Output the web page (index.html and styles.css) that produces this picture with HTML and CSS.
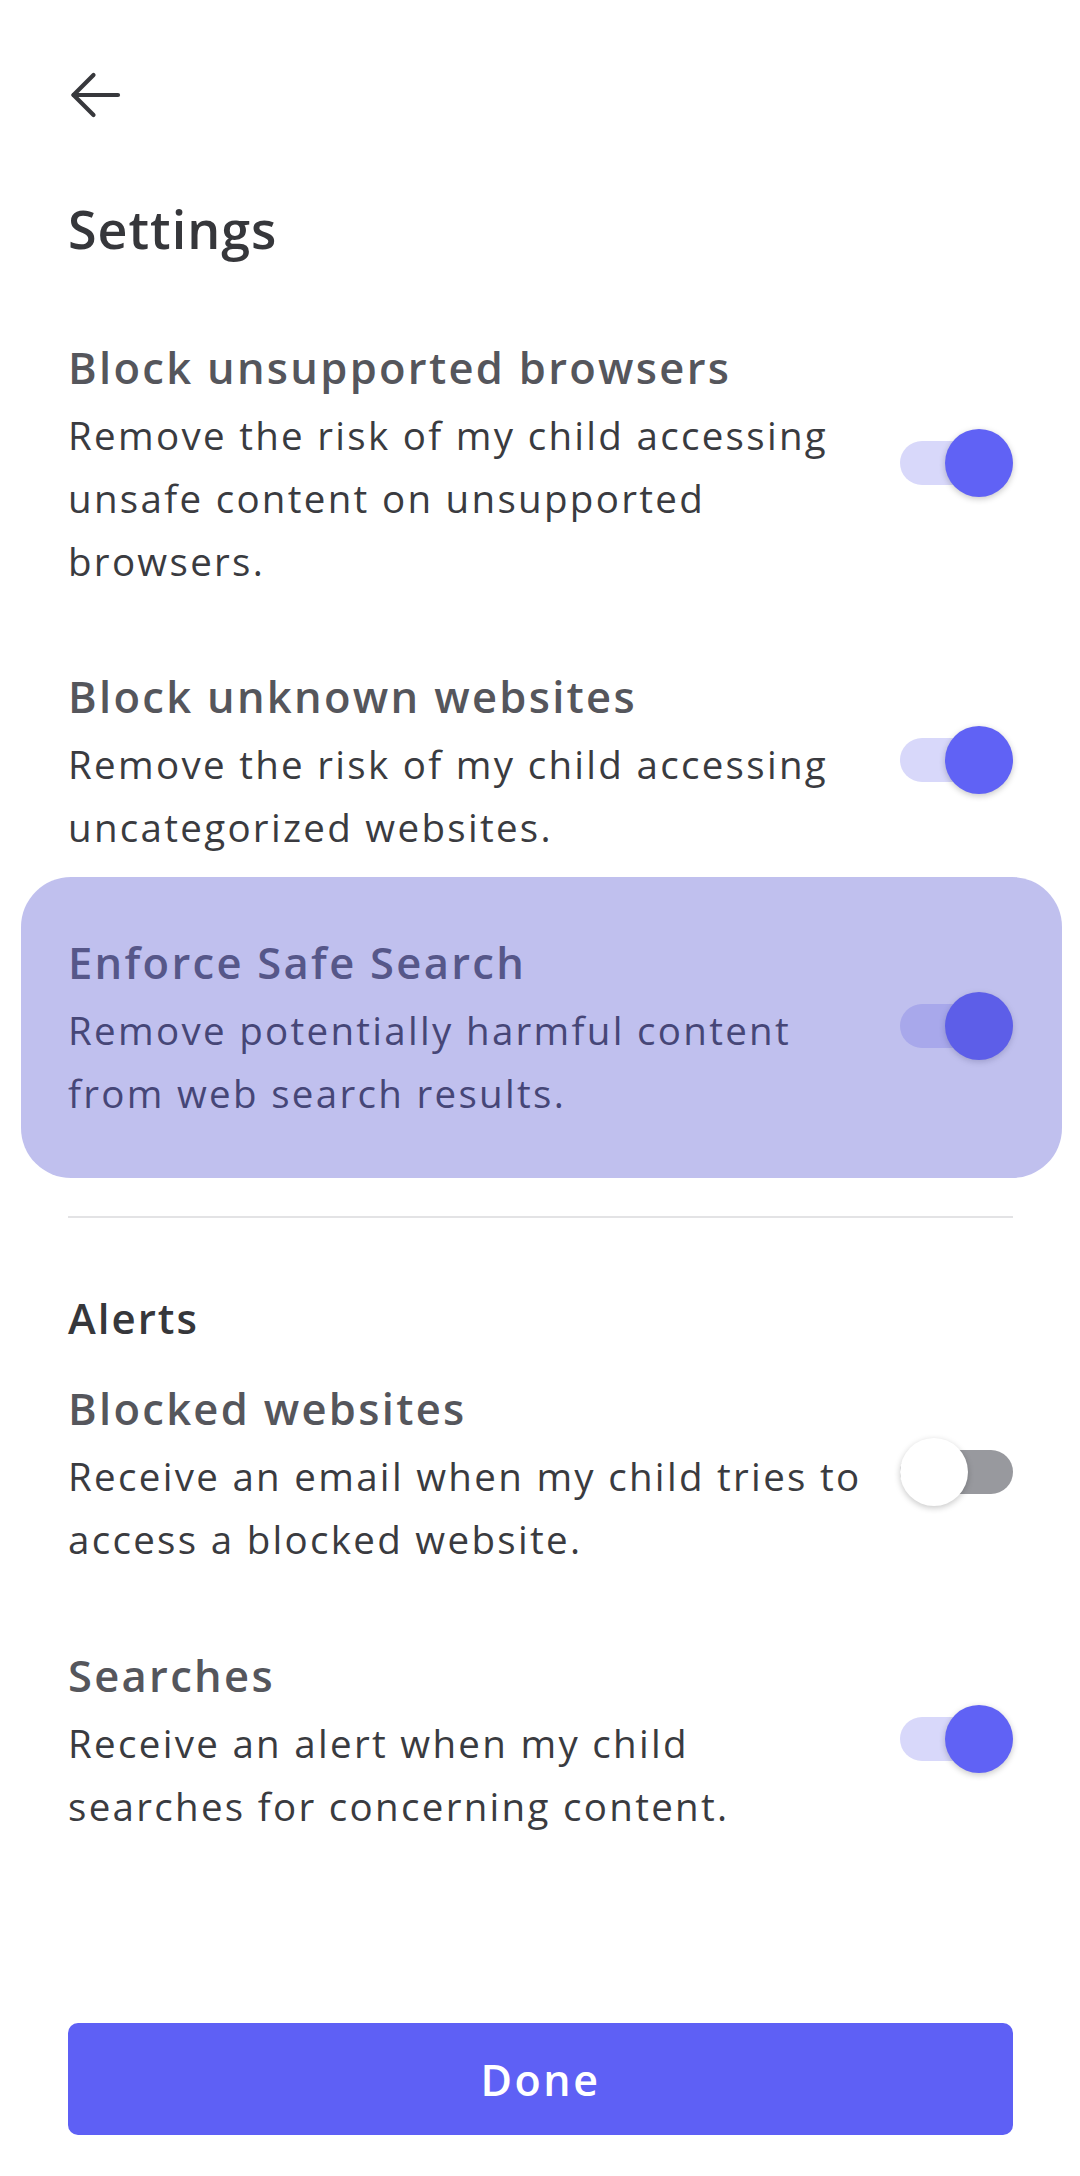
FILE: index.html
```html
<!DOCTYPE html>
<html lang="en">
<head>
<meta charset="utf-8">
<title>Settings</title>
<link rel="stylesheet" href="styles.css">
</head>
<body>
<div class="page">
  <header class="topbar">
    <button class="back" aria-label="Back">
      <svg width="56" height="48" viewBox="0 0 56 48" fill="none" stroke="#37383c" stroke-width="4.2" stroke-linecap="round" stroke-linejoin="round">
        <path d="M5.5 24 H50"/>
        <path d="M25.5 4 L5.5 24 L25.5 44"/>
      </svg>
    </button>
  </header>

  <h1 class="page-title">Settings</h1>

  <div class="list">
    <div class="row">
      <div class="text">
        <div class="row-title">Block unsupported browsers</div>
        <div class="row-desc">Remove the risk of my child accessing<br>unsafe content on unsupported<br>browsers.</div>
      </div>
      <div class="switch on"><span class="track"></span><span class="thumb"></span></div>
    </div>

    <div class="row">
      <div class="text">
        <div class="row-title">Block unknown websites</div>
        <div class="row-desc">Remove the risk of my child accessing<br>uncategorized websites.</div>
      </div>
      <div class="switch on"><span class="track"></span><span class="thumb"></span></div>
    </div>

    <div class="row highlighted">
      <div class="text">
        <div class="row-title">Enforce Safe Search</div>
        <div class="row-desc">Remove potentially harmful content<br>from web search results.</div>
      </div>
      <div class="switch on"><span class="track"></span><span class="thumb"></span></div>
    </div>
  </div>

  <hr class="divider">

  <h2 class="section-title">Alerts</h2>

  <div class="list alerts">
    <div class="row">
      <div class="text">
        <div class="row-title">Blocked websites</div>
        <div class="row-desc">Receive an email when my child tries to<br>access a blocked website.</div>
      </div>
      <div class="switch off"><span class="track"></span><span class="thumb"></span></div>
    </div>

    <div class="row">
      <div class="text">
        <div class="row-title">Searches</div>
        <div class="row-desc">Receive an alert when my child<br>searches for concerning content.</div>
      </div>
      <div class="switch on"><span class="track"></span><span class="thumb"></span></div>
    </div>
  </div>

  <button class="done">Done</button>
</div>
</body>
</html>
```

FILE: styles.css
```css
* { box-sizing: border-box; }

html, body {
  margin: 0;
  padding: 0;
  background: #ffffff;
}

body {
  font-family: "Open Sans", "Noto Sans", sans-serif;
  color: #37383c;
}

.page {
  min-height: 2176px;
  padding: 0 67px 41px 68px;
  display: flex;
  flex-direction: column;
}

.topbar {
  height: 197px;
  padding-top: 71px;
}

.back {
  display: block;
  width: 56px;
  height: 48px;
  padding: 0;
  margin: 0;
  border: 0;
  background: none;
}

.back svg { display: block; }

.page-title {
  margin: 0;
  font-size: 52px;
  line-height: 64px;
  font-weight: 600;
  color: #36373b;
  letter-spacing: 1px;
}

.list {
  display: flex;
  flex-direction: column;
  gap: 68px;
  margin-top: 71px;
}

.row {
  display: flex;
  align-items: center;
  gap: 20px;
  position: relative;
}

.text {
  flex: 1;
  min-width: 0;
  white-space: nowrap;
}

.row-title {
  font-size: 43.5px;
  line-height: 72px;
  font-weight: 600;
  color: #55565c;
  letter-spacing: 2.3px;
}

.row-desc {
  font-size: 38.5px;
  line-height: 63px;
  font-weight: 400;
  color: #3a3b40;
  letter-spacing: 2.3px;
}

.switch {
  flex: none;
  width: 113px;
  height: 68px;
  position: relative;
  display: flex;
  align-items: center;
}

.track {
  display: block;
  width: 113px;
  height: 44px;
  border-radius: 22px;
}

.thumb {
  position: absolute;
  top: 0;
  width: 68px;
  height: 68px;
  border-radius: 50%;
  box-shadow: 0 2px 6px rgba(0, 0, 0, 0.22);
}

.switch.on .track { background: #d8d8fa; }
.switch.on .thumb { right: 0; background: #6062f5; }

.switch.off .track { background: #98999e; }
.switch.off .thumb { left: 0; background: #ffffff; }

.highlighted::after {
  content: "";
  position: absolute;
  top: -50px;
  bottom: -53px;
  left: -47px;
  right: -49px;
  border-radius: 50px;
  background: rgba(89, 89, 210, 0.38);
  pointer-events: none;
}

.divider {
  margin: 91px 0 0 0;
  border: 0;
  height: 2px;
  background: #e3e3e5;
}

.section-title {
  margin: 64px 0 0 0;
  font-size: 42px;
  line-height: 72px;
  font-weight: 600;
  color: #36373b;
  letter-spacing: 2px;
}

.alerts {
  margin-top: 19px;
  gap: 69px;
}

.done {
  margin-top: auto;
  height: 112px;
  width: 100%;
  border: 0;
  border-radius: 10px;
  background: #5e60f5;
  color: #ffffff;
  font-family: "Open Sans", "Noto Sans", sans-serif;
  font-size: 43px;
  font-weight: 600;
  letter-spacing: 2.5px;
}
```
